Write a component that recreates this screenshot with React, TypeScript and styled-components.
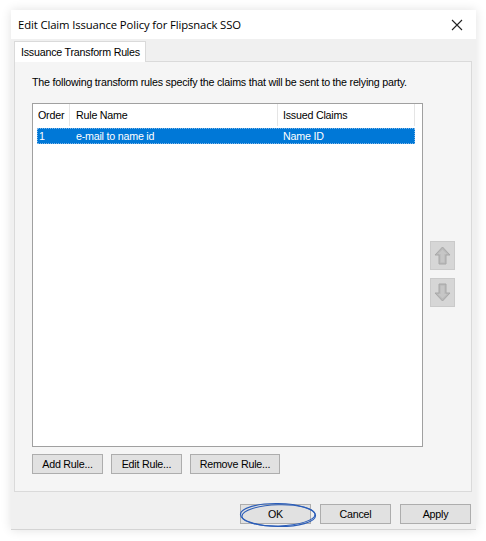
import React from "react";
import styled, { createGlobalStyle } from "styled-components";

const Global = createGlobalStyle`
  html, body { margin: 0; padding: 0; background: #ffffff; }
  body { font-family: "Liberation Sans", Arial, sans-serif; }
`;

const Page = styled.div`
  width: 486px;
  height: 541px;
  padding: 10px 0 0 11px;
  box-sizing: border-box;
  background: #ffffff;
`;

const Dialog = styled.div`
  width: 465px;
  height: 520px;
  box-sizing: border-box;
  background: #f0f0f0;
  border-bottom: 1px solid #d4d4d4;
  box-shadow: 0 0 10px rgba(0, 0, 0, 0.12);
  display: flex;
  flex-direction: column;
  font-size: 10.7px;
  letter-spacing: -0.22px;
  color: #000;
`;

const TitleBar = styled.div`
  height: 29px;
  background: #ffffff;
  display: flex;
  align-items: center;
  justify-content: space-between;
  padding: 0 12px 0 7px;
  font-family: "Open Sans", "Noto Sans", sans-serif;
  font-size: 11.3px;
  letter-spacing: -0.12px;
`;

const CloseBtn = styled.div`
  width: 14px;
  height: 14px;
  display: flex;
  align-items: center;
  justify-content: center;
`;

const Body = styled.div`
  flex: 1;
  display: flex;
  flex-direction: column;
  padding: 2px 4px 0 3px;
`;

const TabStrip = styled.div`
  display: flex;
  height: 20px;
`;

const Tab = styled.div`
  width: 132px;
  box-sizing: border-box;
  background: #ffffff;
  border: 1px solid #dadada;
  border-bottom: none;
  display: flex;
  align-items: center;
  padding-left: 6px;
  white-space: nowrap;
  margin-bottom: -1px;
  position: relative;
  z-index: 1;
`;

const Panel = styled.div`
  height: 431px;
  box-sizing: border-box;
  background: #f5f5f5;
  border: 1px solid #dadada;
  display: flex;
  flex-direction: column;
  padding: 13px 0 0 17px;
`;

const Description = styled.div`
  height: 14px;
  line-height: 14px;
  white-space: nowrap;
`;

const ListRow = styled.div`
  display: flex;
  margin-top: 14px;
`;

const ListBox = styled.div`
  width: 391px;
  height: 344px;
  box-sizing: border-box;
  background: #ffffff;
  border: 1px solid #a0a0a0;
  display: flex;
  flex-direction: column;
`;

const HeaderRow = styled.div`
  display: flex;
  height: 22px;
  width: 382px;
`;

const HeaderCell = styled.div<{ $w: number; $pad: number }>`
  width: ${(p) => p.$w}px;
  box-sizing: border-box;
  border-right: 1px solid #e5e5e5;
  display: flex;
  align-items: center;
  padding-left: ${(p) => p.$pad}px;
`;

const DataRow = styled.div<{ $selected?: boolean }>`
  display: flex;
  height: 16px;
  width: 378px;
  margin: 2px 0 0 4px;
  background: ${(p) => (p.$selected ? "#0078d7" : "transparent")};
  outline: ${(p) => (p.$selected ? "1px dotted #7fb6e8" : "none")};
  outline-offset: -1px;
  color: ${(p) => (p.$selected ? "#ffffff" : "#000")};
`;

const DataCell = styled.div<{ $w: number; $pad: number }>`
  width: ${(p) => p.$w}px;
  box-sizing: border-box;
  padding-left: ${(p) => p.$pad}px;
  display: flex;
  align-items: center;
`;

const SideButtons = styled.div`
  display: flex;
  flex-direction: column;
  gap: 8px;
  margin: 138px 0 0 7px;
`;

const ArrowBtn = styled.div`
  width: 25px;
  height: 29px;
  box-sizing: border-box;
  background: #d6d6d6;
  border: 1px solid #cacaca;
  display: flex;
  align-items: center;
  justify-content: center;
`;

const ActionRow = styled.div`
  display: flex;
  gap: 8px;
  margin-top: 7px;
`;

const Button = styled.div<{ $w: number }>`
  width: ${(p) => p.$w}px;
  height: 20px;
  box-sizing: border-box;
  background: #e1e1e1;
  border: 1px solid #adadad;
  display: flex;
  align-items: center;
  justify-content: center;
  position: relative;
`;

const Footer = styled.div`
  display: flex;
  justify-content: flex-end;
  gap: 9px;
  padding: 12px 1px 0 0;
`;

const Ellipse = styled.svg`
  position: absolute;
  left: -2px;
  top: -3px;
  overflow: visible;
  pointer-events: none;
`;

const ArrowIcon = ({ down }: { down?: boolean }) => (
  <svg width="17" height="19" viewBox="0 0 17 19" style={down ? { transform: "rotate(180deg)" } : undefined}>
    <path d="M8.5 1 L16 9 L12 9 L12 18 L5 18 L5 9 L1 9 Z" fill="#b9b9b9" stroke="#a8a8a8" strokeWidth="1" />
    <path d="M8.5 3.5 L13 8 L10.5 8 L10.5 16.5 L6.5 16.5 L6.5 8 L4 8 Z" fill="#c6c6c6" />
  </svg>
);

export default function App() {
  return (
    <>
      <Global />
      <Page>
        <Dialog>
          <TitleBar>
            <span>Edit Claim Issuance Policy for Flipsnack SSO</span>
            <CloseBtn>
              <svg width="12" height="12" viewBox="0 0 12 12">
                <path d="M1 1 L11 11 M11 1 L1 11" stroke="#222" strokeWidth="1.1" />
              </svg>
            </CloseBtn>
          </TitleBar>
          <Body>
            <TabStrip>
              <Tab>Issuance Transform Rules</Tab>
            </TabStrip>
            <Panel>
              <Description>
                The following transform rules specify the claims that will be sent to the relying party.
              </Description>
              <ListRow>
                <ListBox>
                  <HeaderRow>
                    <HeaderCell $w={37} $pad={5}>Order</HeaderCell>
                    <HeaderCell $w={208} $pad={6}>Rule Name</HeaderCell>
                    <HeaderCell $w={137} $pad={5}>Issued Claims</HeaderCell>
                  </HeaderRow>
                  <DataRow $selected>
                    <DataCell $w={39} $pad={2}>1</DataCell>
                    <DataCell $w={207} $pad={0}>e-mail to name id</DataCell>
                    <DataCell $w={132} $pad={0}>Name ID</DataCell>
                  </DataRow>
                </ListBox>
                <SideButtons>
                  <ArrowBtn>
                    <ArrowIcon />
                  </ArrowBtn>
                  <ArrowBtn>
                    <ArrowIcon down />
                  </ArrowBtn>
                </SideButtons>
              </ListRow>
              <ActionRow>
                <Button $w={71}>Add Rule...</Button>
                <Button $w={71}>Edit Rule...</Button>
                <Button $w={90}>Remove Rule...</Button>
              </ActionRow>
            </Panel>
            <Footer>
              <Button $w={71}>
                OK
                <Ellipse width="78" height="26" viewBox="0 0 78 26">
                  <ellipse cx="39" cy="13" rx="37.5" ry="11.5" fill="none" stroke="#2b5db8" strokeWidth="1.2" transform="rotate(1 39 13)" />
                  <ellipse cx="39.5" cy="13.3" rx="36.5" ry="10.6" fill="none" stroke="#2b5db8" strokeWidth="1" transform="rotate(-1.5 39.5 13.3)" />
                </Ellipse>
              </Button>
              <Button $w={71}>Cancel</Button>
              <Button $w={71}>Apply</Button>
            </Footer>
          </Body>
        </Dialog>
      </Page>
    </>
  );
}
